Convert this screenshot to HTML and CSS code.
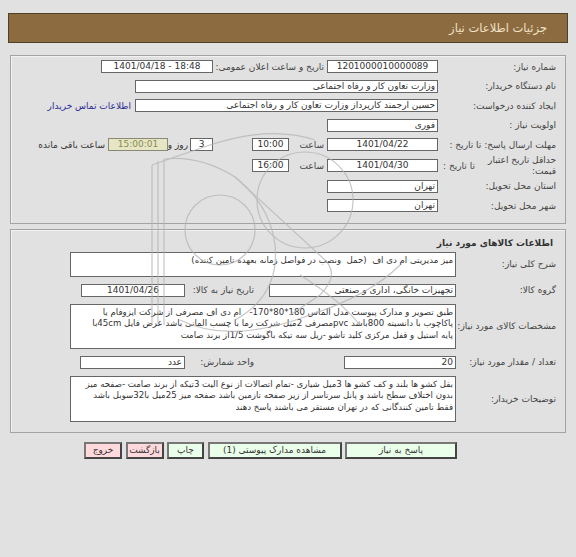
FILE: index.html
```html
<!DOCTYPE html>
<html lang="fa" dir="rtl">
<head>
<meta charset="utf-8">
<title>جزئیات اطلاعات نیاز</title>
<link rel="stylesheet" href="styles.css">
</head>
<body>
<div class="header">جزئیات اطلاعات نیاز</div>

<div class="panel p1">
  <div class="row">
    <div class="lab">شماره نیاز:</div>
    <div class="box w111 c">1201000010000089</div>
    <div class="lab2">تاریخ و ساعت اعلان عمومی:</div>
    <div class="box w112 c ltr">1401/04/18 - 18:48</div>
  </div>
  <div class="row">
    <div class="lab">نام دستگاه خریدار:</div>
    <div class="box w303">وزارت تعاون کار و رفاه اجتماعی</div>
  </div>
  <div class="row">
    <div class="lab">ایجاد کننده درخواست:</div>
    <div class="box w303">حسین ارجمند کارپرداز وزارت تعاون کار و رفاه اجتماعی</div>
    <a class="link" href="#">اطلاعات تماس خریدار</a>
  </div>
  <div class="row">
    <div class="lab">اولویت نیاز :</div>
    <div class="box w111">فوری</div>
  </div>
  <div class="row">
    <div class="lab">مهلت ارسال پاسخ: تا تاریخ :</div>
    <div class="box w111 c">1401/04/22</div>
    <div class="sa">ساعت</div>
    <div class="box w37 c">10:00</div>
    <div class="sp39"></div>
    <div class="box w23 c">3</div>
    <div class="rz">روز و</div>
    <div class="box w60 c rem">15:00:01</div>
    <div class="rm">ساعت باقی مانده</div>
  </div>
  <div class="row tall">
    <div class="lab split"><span class="l2">حداقل تاریخ اعتبار قیمت:</span><span class="tt">تا تاریخ :</span></div>
    <div class="box w111 c">1401/04/30</div>
    <div class="sa">ساعت</div>
    <div class="box w37 c">16:00</div>
  </div>
  <div class="row">
    <div class="lab">استان محل تحویل:</div>
    <div class="box w111">تهران</div>
  </div>
  <div class="row">
    <div class="lab">شهر محل تحویل:</div>
    <div class="box w111">تهران</div>
  </div>
</div>

<div class="panel p2">
  <div class="title">اطلاعات کالاهای مورد نیاز</div>
  <div class="row2">
    <div class="lab">شرح کلی نیاز:</div>
    <div class="area h25">میز مدیریتی ام دی اف &nbsp;(حمل &nbsp;ونصب در فواصل زمانه بعهده تامین کننده)</div>
  </div>
  <div class="row2">
    <div class="lab">گروه کالا:</div>
    <div class="box w187">تجهیزات خانگی، اداری و صنعتی</div>
    <div class="lab3">تاریخ نیاز به کالا:</div>
    <div class="box w104 c">1401/04/26</div>
  </div>
  <div class="row2">
    <div class="lab">مشخصات کالای مورد نیاز:</div>
    <div class="area h45">
      <div>طبق تصویر و مدارک پیوست مدل الماس 180*80*170- &nbsp; ام دی اف مصرفی از شرکت ایزوفام یا</div>
      <div>پاکاچوب با دانسیته 800باشد pvcمصرفی 2میل شرکت رما با چسب المانی باشد عرض فایل 45cmبا</div>
      <div>پایه استیل و قفل مرکزی کلید تاشو -ریل سه تیکه باگوشت 1/5از برند صامت</div>
    </div>
  </div>
  <div class="row2">
    <div class="lab">تعداد / مقدار مورد نیاز:</div>
    <div class="box w112">20</div>
    <div class="gap75"></div>
    <div class="lab3">واحد شمارش:</div>
    <div class="box w105">عدد</div>
  </div>
  <div class="row2">
    <div class="lab">توضیحات خریدار:</div>
    <div class="area h46">
      <div>بقل کشو ها بلند و کف کشو ها 3میل شیاری -تمام اتصالات از نوع الیت 3تیکه از برند صامت -صفحه میز</div>
      <div>بدون اختلاف سطح باشد و پانل سرتاسر از زیر صفحه تازمین باشد صفحه میز 25میل با32سوبل باشد</div>
      <div>فقط تامین کنندگانی که در تهران مستقر می باشند پاسخ دهند</div>
    </div>
  </div>
</div>

<div class="buttons">
  <div class="btn green w112b">پاسخ به نیاز</div>
  <div class="btn green w134b">مشاهده مدارک پیوستی (1)</div>
  <div class="btn green w37b">چاپ</div>
  <div class="btn pink w38b">بازگشت</div>
  <div class="btn pink w38b">خروج</div>
</div>

<svg class="wm" width="330" height="310" viewBox="0 0 330 310" aria-hidden="true">
  <g fill="none" stroke="#b4b4b4" stroke-width="1.2">
    <path d="M12 50 L12 210 M18 46 L18 210 M24 44 L24 210"/>
    <path d="M12 50 Q40 40 70 30 Q130 10 175 25"/>
    <path d="M24 44 Q60 40 95 62 Q130 90 135 130 Q140 180 95 205"/>
    <circle cx="80" cy="115" r="35"/>
    <circle cx="165" cy="85" r="48"/>
    <path d="M95 62 L185 145 Q200 160 180 180 L150 200"/>
    <path d="M40 205 Q90 230 170 200 Q230 180 260 150"/>
    <path d="M160 160 Q200 185 220 210"/>
  </g>
</svg>
</body>
</html>
```
FILE: styles.css
```css
* { box-sizing: border-box; }
html, body { background: #e1e1e1; }
body {
  margin: 8px;
  direction: rtl;
  font-family: "DejaVu Sans", sans-serif;
  font-size: 9px;
  color: #333;
  position: relative;
}
.header {
  margin-top: 5px;
  height: 30px;
  background: #8c6b40;
  border: 1px solid #4f402c;
  color: #f1e3c6;
  font-size: 11.5px;
  display: flex;
  align-items: center;
  padding-right: 20px;
}
.panel {
  margin: 12px 2px 0;
  border: 1px solid #a3a3a3;
  box-shadow: inset 1px 1px 0 #f2f2f2;
}
.p1 { padding: 1px 0 7px; }
.row {
  display: flex;
  align-items: center;
  height: 19.5px;
  white-space: nowrap;
}
.row.tall { height: 22px; }
.lab {
  width: 127px;
  flex: none;
  padding-right: 9px;
  color: #444;
  white-space: nowrap;
}
.box {
  flex: none;
  height: 13px;
  line-height: 11px;
  background: #fff;
  border: 1px solid #666;
  padding: 0 2px;
  overflow: hidden;
  white-space: nowrap;
  color: #333;
}
.c { text-align: center; }
.ltr { direction: ltr; }
.w111 { width: 111px; }
.w112 { width: 112px; }
.w303 { width: 303px; }
.w37 { width: 37px; }
.w23 { width: 23px; }
.w60 { width: 60px; }
.w187 { width: 187px; }
.w104 { width: 104px; }
.w105 { width: 105px; }
.lab2 { width: 114px; flex: none; padding-right: 3px; color: #444; }
.link { color: #2b2b95; text-decoration: none; margin-right: 4px; }
.sa { width: 38px; flex: none; padding-right: 3px; color: #444; }
.sp39 { width: 39px; flex: none; }
.rz { width: 22px; flex: none; padding-right: 2px; }
.rm { padding-right: 3px; }
.rem { background: #e6e6c6; color: #8a8a4c; border-color: #8a8a70; }
.split { display: flex; align-items: center; justify-content: space-between; padding-left: 0; }
.split .l2 { white-space: normal; width: 72px; line-height: 11px; }
.split .tt { padding-left: 5px; }

.p2 {
  margin-top: 5px;
  padding: 0 0 10px;
  display: flex;
  flex-direction: column;
  gap: 7px;
}
.title {
  font-weight: bold;
  color: #333;
  padding-right: 12px;
  height: 14px;
  margin-top: 6px;
  margin-bottom: -5px;
  line-height: 14px;
}
.row2 {
  display: flex;
  align-items: center;
  white-space: nowrap;
}
.p2 .lab { width: 109px; }
.lab3 { width: 84px; flex: none; padding-right: 15px; color: #444; }
.gap75 { width: 75px; flex: none; }
.area {
  width: 386px;
  flex: none;
  background: #fff;
  border: 1px solid #666;
  padding: 2px 2px 0;
  font-size: 8.6px;
  line-height: 11.5px;
  overflow: hidden;
  white-space: nowrap;
}
.h25 { height: 25px; }
.h45 { height: 45px; }
.h46 { height: 46px; }

.buttons {
  display: flex;
  gap: 3.5px;
  margin: 9px 111px 0 0;
}
.btn {
  height: 17px;
  border: 2px solid;
  border-color: #777 #444 #444 #777;
  display: flex;
  align-items: center;
  justify-content: center;
  color: #333;
  white-space: nowrap;
}
.green { background: #eaffea; }
.pink { background: #ffd9dc; }
.w112b { width: 112px; }
.w134b { width: 134px; }
.w37b { width: 37px; }
.w38b { width: 38px; }

.wm {
  position: absolute;
  left: 132px;
  top: 107px;
  pointer-events: none;
  opacity: 0.75;
}
```
